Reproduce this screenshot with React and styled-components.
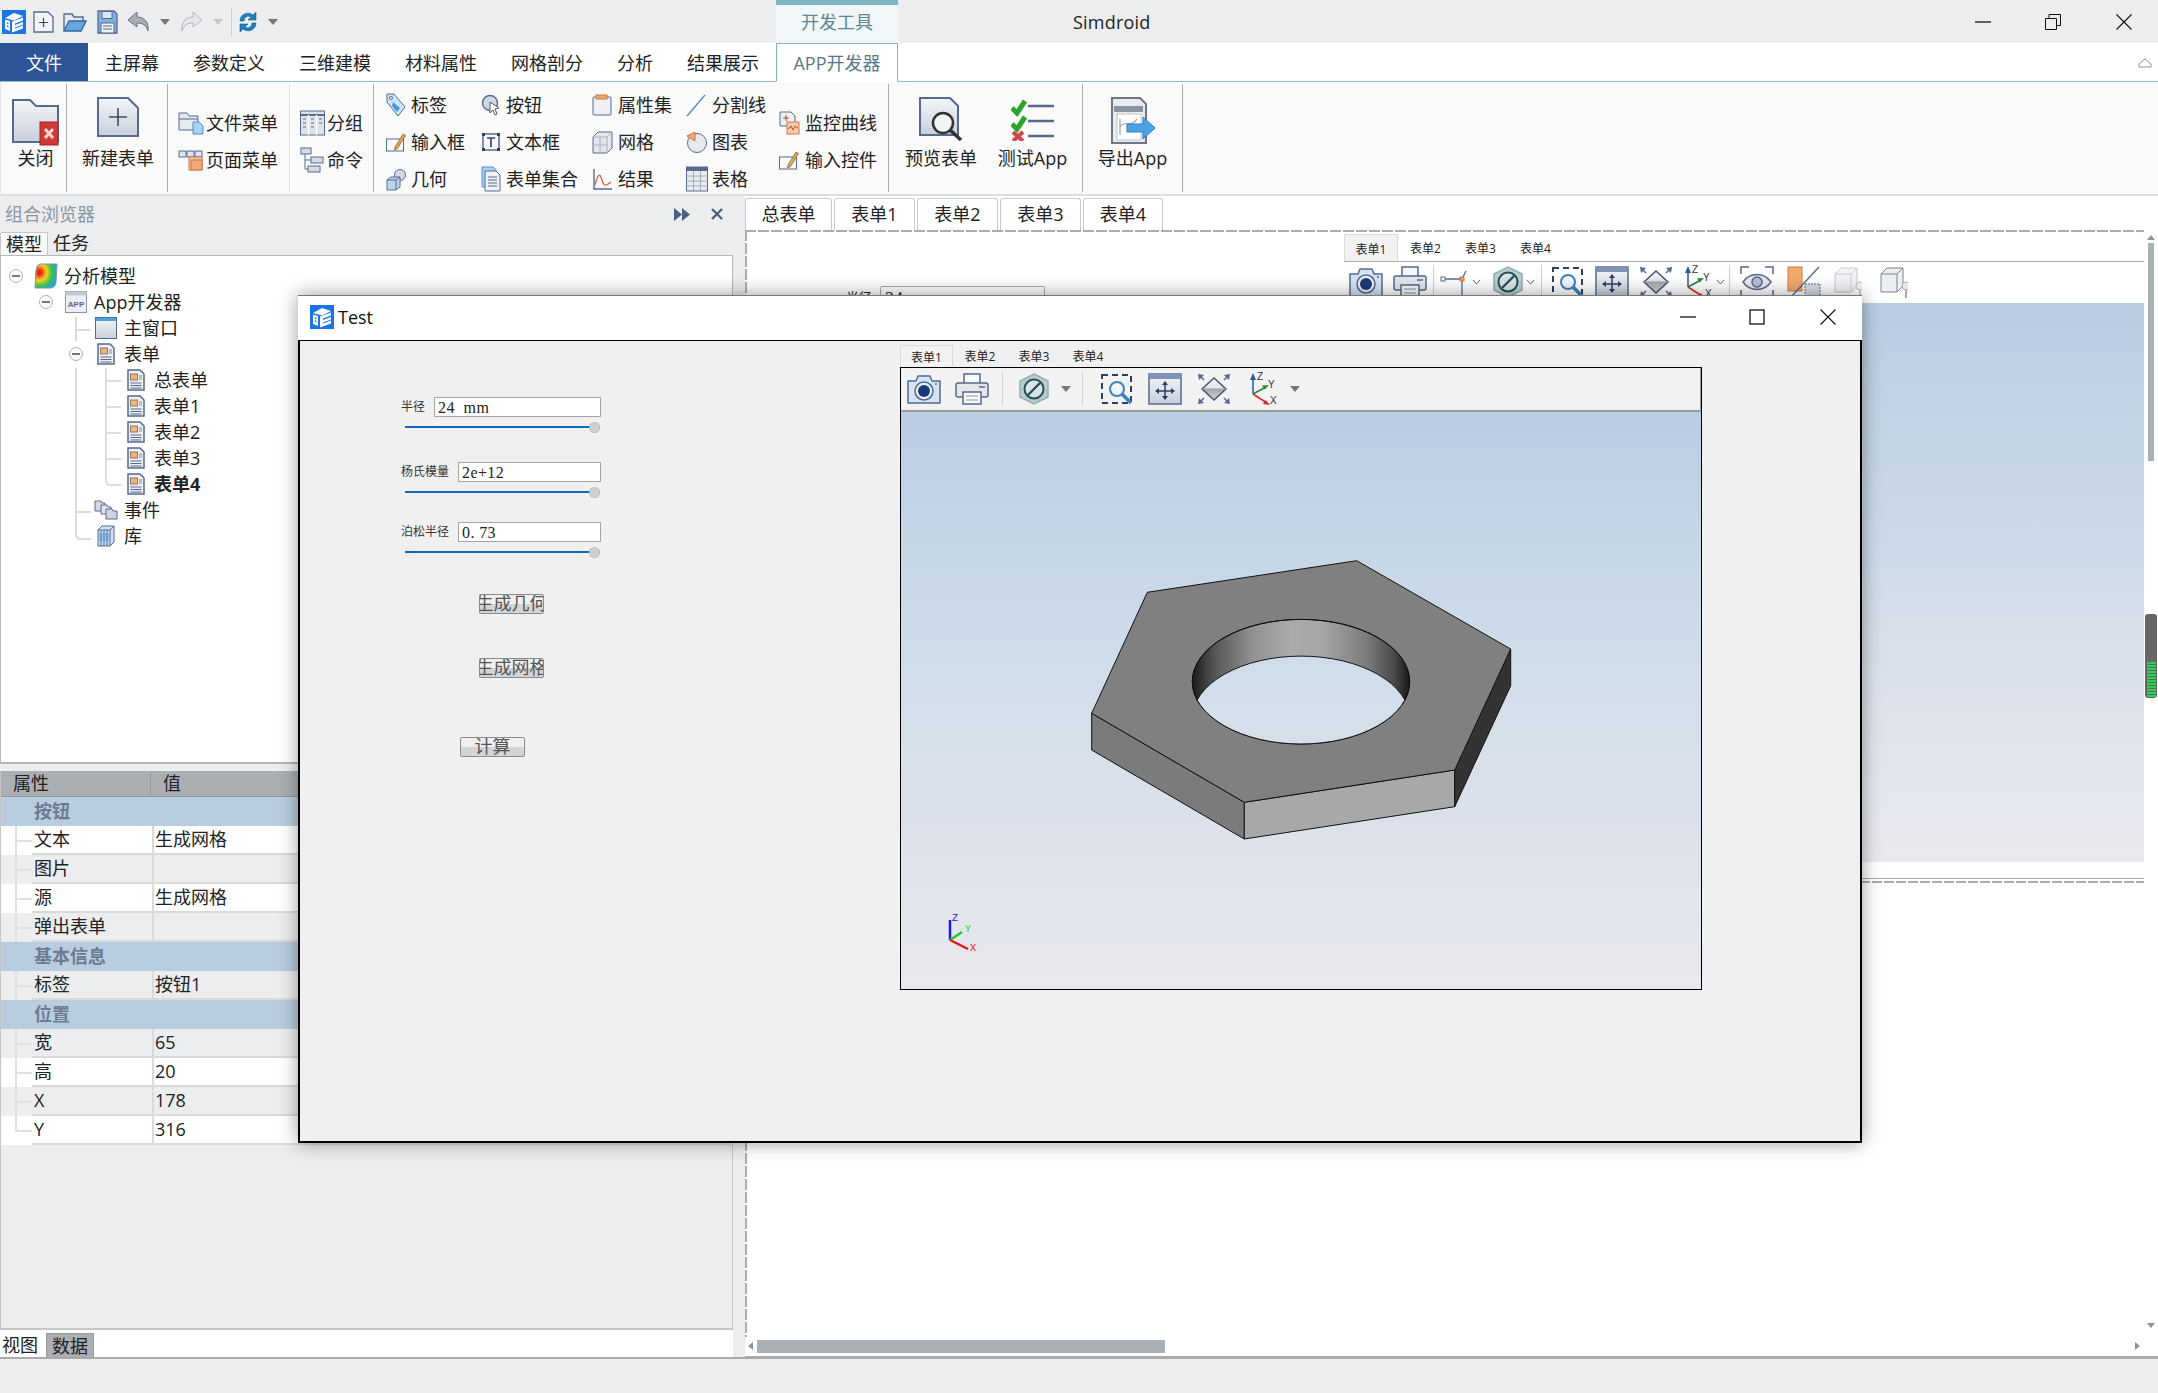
import React from "react";
import styled, { createGlobalStyle } from "styled-components";

const N = "#566a8f";
const UI_FONT = `"Open Sans", "Noto Sans CJK SC", sans-serif`;
const FORM_FONT = `"Liberation Serif", "Noto Sans CJK SC", serif`;

const GlobalStyle = createGlobalStyle`
  html, body { margin: 0; padding: 0; overflow: hidden; background: #ecedef; }
  body { font-family: ${UI_FONT}; color: #222; }
`;

const formGlyph = (
  <>
    <path d="M1 1h12l4 4v16H1z" fill="#eef0f4" stroke={N} strokeWidth="1.5" />
    <rect x="3.5" y="5" width="7" height="6" fill="#f2b27a" stroke="#8a7a6a" />
    <rect x="12" y="6" width="3" height="5" fill="#b8bfca" />
    <path d="M3.5 14h11M3.5 16.5h11M3.5 19h11" stroke={N} />
  </>
);

// every drawn icon: [width, height, shapes]
const ICONS = {
  logo: [24, 24, (
    <>
      <rect width="24" height="24" fill="#1b74e6" />
      <path d="M3 8l9-5 9 3-9 4.500z" fill="#fff" />
      <path d="M3 9.500l5 1.500v10l-5-2zM10 11.500l11-4v3l-8 3v1.500l8-3v2.500l-8 3v1l8-3v3l-11 4z" fill="#fff" />
      <path d="M5 13l1.500.5M5 16l1.500.5" stroke="#1b74e6" strokeWidth="1.500" />
    </>
  )],
  qnew: [21, 22, (
    <>
      <path d="M1 1h14l5 5v15H1z" fill="#f3f4f7" stroke={N} strokeWidth="1.300" />
      <path d="M10.500 7v9M6 11.500h9" stroke="#445" strokeWidth="1.200" />
    </>
  )],
  qopen: [24, 20, (
    <>
      <path d="M1 19V2h8l2 3h9v4" fill="#e4e8ee" stroke={N} strokeWidth="1.400" />
      <path d="M1 19l5-10h17l-5 10z" fill="#6aa6dc" stroke="#2d6aa0" strokeWidth="1.400" />
    </>
  )],
  qsave: [21, 24, (
    <>
      <path d="M1 1h16l3 3v19H1z" fill="#7fb0e0" stroke={N} strokeWidth="1.300" />
      <rect x="5" y="1.500" width="10" height="7" fill="#dfe8f2" stroke={N} />
      <rect x="4" y="13" width="13" height="10" fill="#eef0f3" stroke={N} />
      <path d="M6 16h9M6 19h9" stroke={N} />
    </>
  )],
  undo: [24, 24, (
    <path d="M10 2L1 10l9 7v-4c6 0 9 2 11 8 1-8-3-14-11-14z" fill="#a9adb5" stroke="#6c7280" />
  )],
  redo: [24, 24, (
    <path d="M14 2l9 8-9 7v-4c-6 0-9 2-11 8-1-8 3-14 11-14z" fill="#e5e6e9" stroke="#b2b5bb" />
  )],
  refresh: [20, 24, (
    <>
      <path d="M2 11C2 4 10 1 15 5l3-3v8h-8l3-3C10 5 6 7 6 11z" fill="#1f82bf" stroke="#155a86" strokeWidth=".6" />
      <path d="M18 13c0 7-8 10-13 6l-3 3v-8h8l-3 3c3 2 7 0 7-4z" fill="#1f82bf" stroke="#155a86" strokeWidth=".6" />
    </>
  )],
  folderClose: [47, 49, (
    <>
      <path d="M1 3h17l6 6h22v36H1z" fill="url(#pg)" stroke={N} strokeWidth="2" />
      <rect x="28" y="25" width="18" height="23" fill="#cf3a34" stroke="#a32620" />
      <path d="M33 32l8 9M41 32l-8 9" stroke="#f6d5d2" strokeWidth="3" />
    </>
  )],
  newDoc: [42, 40, (
    <>
      <path d="M1 1h30l10 10v28H1z" fill="url(#pg)" stroke={N} strokeWidth="2" />
      <path d="M21 11v18M12 20h18" stroke="#444d5e" strokeWidth="1.600" />
    </>
  )],
  fileMenu: [26, 24, (
    <>
      <path d="M1 19V2h8l2 3h9v14z" fill="#e6e9ef" stroke={N} />
      <path d="M1 8h19" stroke={N} />
      <path d="M15 11h6l4 4v8H15z" fill="#a9d2f2" stroke="#4f8fc4" />
    </>
  )],
  pageMenu: [26, 22, (
    <>
      <path d="M1 2h7v6H1zM9 2h7v6H9zM17 2h7v6h-7z" fill="#dfe3ea" stroke={N} />
      <rect x="11" y="8" width="13" height="13" fill="#f5c7a0" stroke="#d0774a" />
      <rect x="13" y="11" width="11" height="10" fill="#f0a878" stroke="#d0774a" />
    </>
  )],
  group: [25, 26, (
    <>
      <rect x=".5" y="1" width="24" height="24" fill="#dde1e8" stroke={N} />
      <path d="M.5 5h24" stroke={N} strokeWidth="2" />
      <path d="M8.500 5v20M16.500 5v20" stroke="#fff" strokeWidth="1.500" />
      <path d="M3 9h3M3 13h3M3 17h3M11 9h3M11 13h3M11 17h3M19 9h3M19 13h3" stroke="#8d94a3" strokeWidth="1.500" />
    </>
  )],
  command: [24, 26, (
    <>
      <rect x="1" y="1" width="10" height="6" fill="#d6dae2" stroke={N} />
      <rect x="11" y="10" width="12" height="6" fill="#d6dae2" stroke={N} />
      <rect x="8" y="19" width="12" height="6" fill="#d6dae2" stroke={N} />
      <path d="M5 7v15h3M5 13h6" fill="none" stroke={N} />
    </>
  )],
  tag: [20, 24, (
    <>
      <path d="M1 1h7l11 13-7 9L1 9z" fill="#cfe3f6" stroke={N} />
      <path d="M7 9l7 6-3 4-5-6z" fill="#4b97d8" />
      <circle cx="5" cy="5" r="1.500" fill="#fff" stroke={N} />
    </>
  )],
  inputBox: [20, 20, (
    <>
      <rect x=".5" y="7" width="17" height="12" fill="#fafafa" stroke={N} />
      <path d="M9 15l8-13 2.500 1.500-8 13-3 1.500z" fill="#e8a64c" stroke="#7a6a4a" strokeWidth=".8" />
    </>
  )],
  geom: [20, 24, (
    <>
      <circle cx="14" cy="8" r="5.500" fill="#d4d9e2" stroke={N} />
      <path d="M1 13l4-3h9v10l-4 3H1zM1 13h9v10M10 13l4-3" fill="#bcd5ec" stroke={N} />
    </>
  )],
  cursorBtn: [20, 22, (
    <>
      <circle cx="9" cy="9" r="7.500" fill="#cfd8e6" stroke={N} strokeWidth="1.400" />
      <path d="M9 8l9 6-4 1 2 5-2 1-2-5-3 3z" fill="#fff" stroke="#555" />
    </>
  )],
  textBox: [20, 22, (
    <>
      <rect x="2" y="3" width="16" height="16" fill="none" stroke={N} strokeWidth="1.500" />
      <path d="M1 2h3v3H1zM16 2h3v3h-3zM1 17h3v3H1zM16 17h3v3h-3z" fill="#2d3f66" />
      <path d="M6 7h8M10 7v9" stroke="#2d3f66" strokeWidth="1.600" />
    </>
  )],
  formSet: [20, 26, (
    <>
      <path d="M1 1h11l3 3v17H1z" fill="#a9d2f2" stroke="#4f8fc4" />
      <path d="M4 5h11l4 4v16H4z" fill="#eef0f4" stroke={N} />
      <path d="M7 11h9M7 14h9M7 17h9M7 20h9" stroke={N} />
    </>
  )],
  propSet: [20, 22, (
    <>
      <rect x="1" y="3" width="18" height="18" rx="1" fill="#eef0f4" stroke={N} />
      <rect x="4" y="1" width="11" height="4" fill="#f2a96d" stroke="#c67a42" />
    </>
  )],
  mesh: [21, 24, (
    <>
      <path d="M1 7l5-5h14v16l-5 5H1z" fill="#e3e6ec" stroke={N} />
      <path d="M1 7h14v16M15 7l5-5M8 7v16M1 15h14" fill="none" stroke="#aab2c0" />
    </>
  )],
  result: [20, 24, (
    <>
      <path d="M2 2v20h18" fill="none" stroke={N} strokeWidth="1.400" />
      <path d="M3 18C6 6 8 6 10 13s4 6 9 2" fill="none" stroke="#c8694f" strokeWidth="1.300" />
    </>
  )],
  divider: [20, 24, <path d="M1 23L19 2" stroke="#4f8fc4" strokeWidth="1.400" />],
  chart: [21, 24, (
    <>
      <circle cx="11" cy="13" r="9.500" fill="#e8eaf0" stroke={N} />
      <path d="M9 11V2L1 6z" fill="#f0a878" stroke="#c67a42" />
    </>
  )],
  table: [22, 26, (
    <>
      <rect x=".5" y="1" width="21" height="24" fill="#e9ebf0" stroke={N} />
      <rect x=".5" y="1" width="21" height="4" fill={N} />
      <path d="M7.500 5v20M14.500 5v20M.5 10h21M.5 15h21M.5 20h21" stroke="#a4acba" />
    </>
  )],
  monitor: [21, 24, (
    <>
      <path d="M1 1h11l4 4v10H1z" fill="#eef0f4" stroke={N} />
      <path d="M7 4v6M4 7h6" stroke="#b04a3a" />
      <rect x="8" y="11" width="12" height="12" fill="#f6cba7" stroke="#d0774a" />
      <path d="M9 18l3-3 2 4 2-4 3 2" fill="none" stroke="#b04a3a" />
    </>
  )],
  preview: [44, 44, (
    <>
      <path d="M1 1h30l8 8v29H1z" fill="url(#pg)" stroke={N} strokeWidth="2" />
      <circle cx="24" cy="26" r="10" fill="#f3f4f6" stroke="#333" strokeWidth="2.500" />
      <path d="M31 33l11 10" stroke="#333" strokeWidth="3.500" />
    </>
  )],
  testApp: [44, 44, (
    <>
      <path d="M1 11l5 5L14 4" fill="none" stroke="#2aa52a" strokeWidth="5" />
      <path d="M1 27l5 5 8-12" fill="none" stroke="#2aa52a" strokeWidth="5" />
      <path d="M2 35l10 9M12 35L2 44" stroke="#c94a4a" strokeWidth="4" />
      <path d="M17 9h26M17 24h26M17 39h26" stroke={N} strokeWidth="2.500" />
    </>
  )],
  exportApp: [44, 48, (
    <>
      <path d="M1 1h28l6 6v39H1z" fill="#e9ebef" stroke="#6f7684" strokeWidth="2" />
      <rect x="3" y="9" width="29" height="6" fill="#8b94a3" />
      <rect x="6" y="17" width="24" height="26" fill="#fff" stroke="#c0c5ce" />
      <path d="M9 38V22M9 30c5-8 10 2 17-8" fill="none" stroke="#aab2bd" strokeWidth="1.500" />
      <path d="M16 27h16v-7l12 11-12 11v-7H16z" fill="#4ba3e3" stroke="#2e82be" />
    </>
  )],
  heat: [24, 26, (
    <>
      <path d="M6 1h17l-1 18q-1 6-6 6H1l1-18q1-6 4-6z" fill="url(#hg)" stroke="#7e93ad" />
    </>
  )],
  appWin: [22, 22, (
    <>
      <rect x=".5" y=".5" width="21" height="21" fill="#eceef2" stroke="#8b96a8" />
      <rect x=".5" y=".5" width="21" height="4" fill="#c5cad3" />
      <text x="11" y="16" textAnchor="middle" fontFamily="Liberation Sans" fontWeight="700" fontSize="8" fill={N}>APP</text>
    </>
  )],
  mainWin: [22, 22, (
    <>
      <rect x=".5" y=".5" width="21" height="21" fill="url(#pg)" stroke={N} />
      <rect x="1" y="1" width="20" height="3" fill="#4ba3e3" />
    </>
  )],
  form: [18, 22, formGlyph],
  events: [24, 20, (
    <>
      <path d="M1 1h6l1 2h3v8H1z" fill="#d6dae2" stroke={N} />
      <path d="M7 5h6l1 2h3v7H7z" fill="#e0e3ea" stroke={N} />
      <path d="M12 9h6l1 2h4v8H12z" fill="#cfd4de" stroke={N} />
    </>
  )],
  lib: [18, 22, (
    <>
      <path d="M1 5l4-4h12v16l-4 4H1z" fill="#cfe1f3" stroke={N} />
      <path d="M1 5h12v16M13 5l4-4M4 5v16M7 5v16M10 5v16" fill="none" stroke={N} />
      <path d="M2 8h10v8H2z" fill="#5aa0dc" opacity=".55" />
    </>
  )],
  camera: [34, 30, (
    <>
      <path d="M1 7h8l2-5h12l2 5h8v22H1z" fill="#d4e4f5" stroke={N} strokeWidth="1.500" strokeLinejoin="round" />
      <circle cx="17" cy="17" r="9" fill="#eaf1f9" stroke={N} strokeWidth="1.500" />
      <circle cx="17" cy="17" r="6" fill="#1d3a78" />
      <circle cx="29" cy="10" r="1" fill={N} />
    </>
  )],
  printer: [34, 32, (
    <>
      <path d="M9 10V1h16v9" fill="#f7f8fa" stroke={N} strokeWidth="1.500" />
      <rect x="1" y="10" width="32" height="14" rx="2" fill="#e3e6ec" stroke={N} strokeWidth="1.500" />
      <path d="M24 14h6" stroke={N} strokeWidth="1.500" />
      <rect x="8" y="19" width="18" height="12" fill="#f7f8fa" stroke={N} strokeWidth="1.500" />
      <path d="M11 23h12M11 27h12" stroke="#8d97a8" />
    </>
  )],
  measure: [30, 30, (
    <>
      <path d="M4 12h18M22 12v18M22 12l4-8" fill="none" stroke={N} strokeWidth="1.300" />
      <rect x="1" y="10" width="4" height="4" fill="#fff" stroke={N} />
      <rect x="20" y="10" width="4" height="4" fill="#f0a060" stroke="#c67a42" />
    </>
  )],
  ban: [30, 32, (
    <>
      <path d="M15 1l14 7v16l-14 7-14-7V8z" fill="#b9cdd0" stroke="#93afb3" strokeWidth="1.500" />
      <circle cx="15" cy="16" r="9.500" fill="#dbe3e6" stroke="#274f57" strokeWidth="2" />
      <path d="M9 22L21 10" stroke="#274f57" strokeWidth="2.400" />
    </>
  )],
  zoomBox: [32, 32, (
    <>
      <rect x="1" y="2" width="29" height="28" fill="none" stroke="#2d3f66" strokeWidth="2" strokeDasharray="6 4" />
      <circle cx="16" cy="16" r="7" fill="#f2f5f9" stroke="#3b83bd" strokeWidth="2" />
      <path d="M21 21l9 9" stroke="#3b83bd" strokeWidth="3.500" />
    </>
  )],
  fit: [34, 32, (
    <>
      <rect x="1" y="1" width="32" height="30" fill="url(#pg)" stroke={N} strokeWidth="1.500" />
      <rect x="1" y="1" width="32" height="5" fill="#7f93b6" />
      <path d="M17 9v17M8 18h18" stroke="#2d3f66" strokeWidth="1.500" />
      <path d="M17 8l-3 4h6zM17 27l-3-4h6zM7 18l4-3v6zM27 18l-4-3v6z" fill="#2d3f66" />
    </>
  )],
  diamond: [34, 32, (
    <>
      <path d="M17 5l12 11-12 11L5 16z" fill="url(#dg)" stroke="#445572" strokeWidth="1.500" />
      <path d="M5 16h24" stroke="#9a9ea6" />
      <path d="M1 1l6 1-5 5zM33 1l-6 1 5 5zM1 31l6-1-5-5zM33 31l-6-1 5-5z" fill={N} />
      <path d="M3 3l4 4M31 3l-4 4M3 29l4-4M31 29l-4-4" stroke={N} strokeWidth="1.500" />
    </>
  )],
  axes: [32, 34, (
    <>
      <path d="M6 22V6" stroke="#2a56a8" strokeWidth="1.500" />
      <path d="M6 1L3 8h6z" fill="#2a56a8" />
      <path d="M6 22l13-7" stroke="#1e8a3d" strokeWidth="1.500" />
      <path d="M22 13l-7 .5 2.500 4z" fill="#1e8a3d" />
      <path d="M6 22l14 9" stroke="#d62a2a" strokeWidth="1.500" />
      <path d="M23 33l-7-1 2.500-4z" fill="#d62a2a" />
      <text x="10" y="8" fontFamily="Liberation Sans" fontSize="10" fill="#333">Z</text>
      <text x="21" y="16" fontFamily="Liberation Sans" fontSize="10" fill="#333">Y</text>
      <text x="23" y="32" fontFamily="Liberation Sans" fontSize="10" fill="#333">X</text>
    </>
  )],
  eye: [34, 32, (
    <>
      <path d="M1 8V1h8M25 1h8v7M1 24v7h8M25 31h8v-7" fill="none" stroke={N} strokeWidth="1.500" />
      <path d="M3 16C10 6 24 6 31 16 24 26 10 26 3 16z" fill="#e5e8ee" stroke={N} strokeWidth="1.500" />
      <circle cx="17" cy="16" r="5" fill="#b5c0d2" stroke={N} strokeWidth="1.500" />
    </>
  )],
  split: [36, 32, (
    <>
      <rect x="1" y="1" width="14" height="24" fill="#f2a96d" stroke="#d07a3f" />
      <path d="M32 1L3 32" stroke={N} strokeWidth="1.400" />
      <rect x="18" y="18" width="15" height="14" fill="#d8dce4" stroke={N} strokeDasharray="2 1" />
    </>
  )],
  box1: [28, 32, (
    <>
      <path d="M1 8l6-6h16v18l-6 6H1z" fill="#f2f3f5" stroke="#c9ccd2" />
      <path d="M1 8h16v18M17 8l6-6" fill="none" stroke="#c9ccd2" />
      <circle cx="26" cy="20" r="4" fill="#f2f3f5" stroke="#c0c3c9" />
      <path d="M26 24v8" stroke="#c0c3c9" strokeWidth="2" />
    </>
  )],
  box2: [28, 32, (
    <>
      <path d="M1 8l6-6h16v18l-6 6H1z" fill="#eceef1" stroke="#7d838d" />
      <path d="M1 8h16v18M17 8l6-6" fill="none" stroke="#7d838d" />
      <circle cx="26" cy="20" r="4" fill="#e8e9ec" stroke="#a5a9b0" />
      <path d="M26 24v8" stroke="#a5a9b0" strokeWidth="2" />
    </>
  )],
};

const Svg = styled.svg`
  display: block;
  flex: none;
  margin-left: ${(p) => p.$ml || 0}px;
`;

const Icon = ({ name, ml }) => {
  const [w, h, body] = ICONS[name];
  return (
    <Svg $ml={ml} width={w} height={h} viewBox={`0 0 ${w} ${h}`}>
      {body}
    </Svg>
  );
};

const Defs = styled.svg`
  position: absolute;
  width: 0;
  height: 0;
`;

const Page = styled.div`
  position: relative;
  width: 2158px;
  height: 1393px;
  display: flex;
  flex-direction: column;
  overflow: hidden;
  background: #ecedef;
  font-size: 18px;
  line-height: 24px;
`;

/* title bar */
const TitleBar = styled.div`
  height: 43px;
  display: flex;
  flex: none;
`;
const QuickBar = styled.div`
  width: 776px;
  flex: none;
  display: flex;
  align-items: center;
  padding-left: 2px;
  box-sizing: border-box;
`;
const Caret = styled.span`
  flex: none;
  margin-left: ${(p) => p.$ml || 0}px;
  border-left: 5px solid transparent;
  border-right: 5px solid transparent;
  border-top: 6px solid ${(p) => p.$color || "#777"};
`;
const QuickSep = styled.span`
  width: 1px;
  height: 28px;
  margin-left: 8px;
  background: #c8cacd;
`;
const ContextTab = styled.div`
  width: 122px;
  flex: none;
  box-sizing: border-box;
  border-top: 5px solid #7fb5c2;
  background: #f1f6f9;
  color: #5c8796;
  text-align: center;
  line-height: 35px;
`;
const AppTitle = styled.div`
  padding-left: 175px;
  line-height: 44px;
  color: #222;
  letter-spacing: 0.2px;
`;
const WindowButtons = styled.div`
  margin-left: auto;
  padding-right: 26px;
  display: flex;
  align-items: center;
`;
const WinGlyph = styled.svg`
  display: block;
  margin-left: ${(p) => p.$ml || 0}px;
`;

/* ribbon tabs */
const TabBar = styled.div`
  height: 39px;
  flex: none;
  box-sizing: border-box;
  background: #fff;
  border-bottom: 1px solid #8fbac6;
  display: flex;
  position: relative;
`;
const MenuTab = styled.div`
  padding: 0 17px;
  line-height: 40px;
  ${(p) => p.$file && "width: 88px; box-sizing: border-box; text-align: center; background: #2b5597; color: #fff;"}
  ${(p) =>
    p.$active &&
    `width: 122px; height: 39px; box-sizing: border-box; border: 1px solid #7fb5c2; border-bottom: 1px solid #fff;
     color: #56798a; background: #fff; padding: 0; text-align: center; line-height: 38px; white-space: nowrap;`}
`;
const Collapse = styled.svg`
  margin: 15px 6px 0 auto;
`;

/* ribbon */
const Ribbon = styled.div`
  height: 114px;
  flex: none;
  box-sizing: border-box;
  background: #fafafa;
  border-bottom: 2px solid #dcdde0;
  border-left: 1px solid #e4e5e8;
  padding-top: 2px;
  display: flex;
`;
const RibbonGroup = styled.div`
  width: ${(p) => p.$w}px;
  height: 108px;
  box-sizing: border-box;
  border-right: 1px solid ${(p) => (p.$soft ? "#dfe0e3" : "#a9abaf")};
  display: flex;
  flex: none;
  padding-left: ${(p) => p.$pad || 0}px;
`;
const LargeButton = styled.div`
  width: ${(p) => p.$w || "100%"};
  flex: none;
  display: flex;
  flex-direction: column;
  align-items: center;
  padding-top: 13px;
  box-sizing: border-box;
`;
const LargeIcon = styled.div`
  height: 49px;
`;
const LargeLabel = styled.div`
  white-space: nowrap;
  line-height: 24px;
`;
const SmallColumn = styled.div`
  width: ${(p) => (p.$w ? `${p.$w}px` : "auto")};
  flex: none;
  display: flex;
  flex-direction: column;
  padding-top: ${(p) => p.$top}px;
`;
const SmallButton = styled.div`
  height: 37px;
  flex: none;
  display: flex;
  align-items: center;
  white-space: nowrap;
`;
const SmallIcon = styled.div`
  width: ${(p) => p.$w || 20}px;
  flex: none;
  margin-right: ${(p) => p.$gap || 5}px;
`;

/* main area */
const Main = styled.div`
  flex: 1;
  display: flex;
  min-height: 0;
`;
const LeftPanel = styled.div`
  width: 733px;
  flex: none;
  display: flex;
  flex-direction: column;
  margin-right: 12px;
`;
const BrowserHead = styled.div`
  height: 36px;
  flex: none;
  display: flex;
  align-items: center;
  padding: 0 10px 0 5px;
  color: #8c96a3;
`;
const HeadButtons = styled.div`
  margin-left: auto;
  display: flex;
  align-items: center;
  gap: 21px;
`;
const ModelTabs = styled.div`
  height: 23px;
  flex: none;
  display: flex;
  align-items: flex-end;
`;
const ModelTab = styled.div`
  height: 23px;
  box-sizing: border-box;
  padding: 0 5px;
  line-height: 23px;
  ${(p) => p.$on && "background:#fafafa; border:1px solid #c4c6ca; border-bottom:none; border-radius:2px 2px 0 0;"}
`;
const Tree = styled.div`
  position: relative;
  height: 509px;
  flex: none;
  box-sizing: border-box;
  background: #fff;
  border: 1px solid #b4b6ba;
  border-width: 1px 1px 2px 1px;
  padding-top: 7px;
  margin-bottom: 7px;
`;
const TreeLines = styled.svg`
  position: absolute;
  left: 0;
  top: 0;
`;
const TreeRow = styled.div`
  height: 26px;
  display: flex;
  align-items: center;
  padding-left: ${(p) => 8 + p.$depth * 30}px;
`;
const ToggleSlot = styled.div`
  width: 14px;
  height: 14px;
  flex: none;
  box-sizing: border-box;
  display: flex;
  align-items: center;
  justify-content: center;
  ${(p) => p.$shown && "border: 1px solid #b0b3b8; border-radius: 50%; background: #fafafa;"}
  &::before {
    content: "";
    width: 8px;
    height: 2px;
    background: ${(p) => (p.$shown ? "#777" : "transparent")};
  }
`;
const TreeIcon = styled.div`
  width: 24px;
  flex: none;
  margin-left: 11px;
  display: flex;
  justify-content: center;
  position: relative;
`;
const TreeLabel = styled.div`
  margin-left: 6px;
  font-weight: ${(p) => (p.$bold ? 700 : 400)};
`;

const Properties = styled.div`
  flex: 1;
  min-height: 0;
  background: #ecedef;
  border: 1px solid #c4c6ca;
  border-width: 0 1px 2px 1px;
`;
const PropHead = styled.div`
  height: 25px;
  display: flex;
  background: #abafb3;
  border-bottom: 1px solid #8f9397;
  line-height: 25px;
`;
const PropHeadCell = styled.div`
  width: ${(p) => (p.$w ? `${p.$w}px` : "auto")};
  box-sizing: border-box;
  padding-left: 12px;
  ${(p) => p.$w && "border-right: 1px solid #979b9f;"}
`;
const PropGroup = styled.div`
  height: 29px;
  background: #b9cde0;
  color: #6c7c90;
  font-weight: 700;
  padding-left: 33px;
  line-height: 28px;
`;
const PropRow = styled.div`
  position: relative;
  height: 29px;
  display: flex;
  background: ${(p) => (p.$alt ? "#ecedef" : "#fff")};
  &::before {
    content: "";
    position: absolute;
    left: 14px;
    top: 0;
    width: 2px;
    height: ${(p) => (p.$last ? "15px" : "29px")};
    background: #dfe0e2;
  }
  &::after {
    content: "";
    position: absolute;
    left: 14px;
    top: 14px;
    width: 17px;
    height: 2px;
    background: #dfe0e2;
  }
`;
const PropName = styled.div`
  width: 118px;
  margin-left: 31px;
  padding-left: 2px;
  box-sizing: content-box;
  border-bottom: 2px solid #d9dadc;
  line-height: 27px;
  flex: none;
`;
const PropValue = styled.div`
  flex: 1;
  box-sizing: border-box;
  border-left: 2px solid #d9dadc;
  border-bottom: 2px solid #d9dadc;
  padding-left: 1px;
  line-height: 27px;
`;
const BottomTabs = styled.div`
  height: 27px;
  flex: none;
  background: #fff;
  display: flex;
  align-items: flex-end;
  padding: 0 0 0 2px;
`;
const BottomTab = styled.div`
  height: 24px;
  line-height: 25px;
  padding: 0 5px 0 ${(p) => (p.$on ? 5 : 0)}px;
  margin-right: ${(p) => (p.$on ? 0 : 3)}px;
  ${(p) => p.$on && "background: #abafb3; border: 1px solid #999; border-bottom: none; box-sizing: border-box;"}
`;

/* right side: form designer behind the dialog */
const RightPanel = styled.div`
  flex: 1;
  min-width: 0;
  display: flex;
  flex-direction: column;
  background: #fff;
`;
const FormTabs = styled.div`
  height: 34px;
  flex: none;
  box-sizing: border-box;
  padding-top: 2px;
  display: flex;
  gap: 2px;
  background: #fff;
`;
const FormTab = styled.div`
  width: ${(p) => p.$w || 79}px;
  height: 32px;
  box-sizing: border-box;
  border: 1px solid #c8c9cc;
  border-bottom: none;
  border-radius: 3px 3px 0 0;
  text-align: center;
  line-height: 30px;
`;
const DesignArea = styled.div`
  flex: 1;
  min-height: 0;
  display: flex;
`;
const Surface = styled.div`
  flex: 1;
  min-width: 0;
  box-sizing: border-box;
  padding: 4px 0 0 2px;
  background:
    repeating-linear-gradient(90deg, #a9abaf 0 11px, #fff 11px 13px) top left / 100% 2px no-repeat,
    repeating-linear-gradient(180deg, #a9abaf 0 11px, #fff 11px 13px) top left / 2px 100% no-repeat;
  display: flex;
`;
const MiniForm = styled.div`
  width: 597px;
  flex: none;
  padding: 52px 0 0 99px;
  box-sizing: border-box;
  display: flex;
  gap: 8px;
  font-family: ${FORM_FONT};
  font-size: 13px;
`;
const MiniInput = styled.div`
  width: 165px;
  height: 24px;
  box-sizing: border-box;
  border: 1px solid #aaa;
  border-radius: 2px;
  padding-left: 4px;
  font-size: 18px;
`;
const MiniViewer = styled.div`
  flex: 1;
  display: flex;
  flex-direction: column;
`;
const MiniTabs = styled.div`
  height: 27px;
  flex: none;
  display: flex;
  border-bottom: 1px solid #aaa;
`;
const ViewTab = styled.div`
  width: ${(p) => p.$w}px;
  height: ${(p) => p.$h}px;
  box-sizing: border-box;
  font-size: 12px;
  line-height: ${(p) => p.$h + 2}px;
  text-align: center;
  white-space: nowrap;
  ${(p) => p.$on && "background: #f2f2f2; border: 1px solid #d9d9d9; border-bottom: none;"}
`;
const MiniToolbar = styled.div`
  height: 41px;
  flex: none;
  box-sizing: border-box;
  display: flex;
  align-items: center;
  padding: 0 0 2px 5px;
`;
const ToolSep = styled.span`
  flex: none;
  width: 1px;
  height: ${(p) => p.$h || 34}px;
  margin-left: ${(p) => p.$ml}px;
  background: #d0d1d4;
`;
const TinyChevron = styled.svg`
  flex: none;
  margin-left: ${(p) => p.$ml}px;
`;
const MiniCanvas = styled.div`
  height: 559px;
  flex: none;
  background: linear-gradient(#b9cde3, #cddbe9 46%, #d8dfea 60%, #e4e7ee 88%, #e8e9ed);
`;
const DashLines = styled.div`
  margin-top: 16px;
  height: 5px;
  box-sizing: border-box;
  border-top: 1px solid #a9abaf;
  background: repeating-linear-gradient(90deg, #a9abaf 0 10px, #fff 10px 12px) left bottom / 100% 2px no-repeat;
`;
const VScroll = styled.div`
  width: 14px;
  flex: none;
  display: flex;
  flex-direction: column;
  align-items: center;
  padding-top: 5px;
`;
const ArrowUp = styled.span`
  flex: none;
  border-left: 4px solid transparent;
  border-right: 4px solid transparent;
  border-bottom: 5px solid #8c9399;
`;
const ArrowDown = styled(ArrowUp)`
  margin-top: auto;
  margin-bottom: 9px;
  border-bottom: none;
  border-top: 5px solid #8c9399;
`;
const VThumb = styled.div`
  width: 6px;
  height: 218px;
  margin-top: 3px;
  background: #abb0b4;
`;
const GripThumb = styled.div`
  width: 12px;
  height: 84px;
  margin-top: 153px;
  box-sizing: border-box;
  border-radius: 3px;
  background: #676767;
  padding-top: 48px;
  display: flex;
  flex-direction: column;
  gap: 1px;
  align-items: center;
`;
const GripLine = styled.span`
  width: 9px;
  height: 2px;
  background: #25d24e;
`;
const HScroll = styled.div`
  height: 20px;
  flex: none;
  box-sizing: border-box;
  border-bottom: 1px solid #aaa;
  display: flex;
  align-items: center;
  padding: 0 18px 1px 3px;
  background: #fff;
`;
const ArrowLeft = styled.span`
  flex: none;
  border-top: 4px solid transparent;
  border-bottom: 4px solid transparent;
  border-right: 5px solid #8c9399;
`;
const ArrowRight = styled.span`
  flex: none;
  margin-left: auto;
  border-top: 4px solid transparent;
  border-bottom: 4px solid transparent;
  border-left: 5px solid #8c9399;
`;
const HThumb = styled.div`
  width: 408px;
  height: 13px;
  margin-left: 4px;
  background: #abb0b4;
`;
const StatusBar = styled.div`
  height: 36px;
  flex: none;
  box-sizing: border-box;
  border-top: 2px solid #aaa;
  background: #ecedef;
`;

/* the floating Test window */
const Dialog = styled.div`
  position: absolute;
  left: 298px;
  top: 295px;
  width: 1564px;
  height: 848px;
  display: flex;
  flex-direction: column;
  background: #fff;
  border-top: 1px solid #777;
  box-sizing: border-box;
  box-shadow: 0 0 18px rgba(0, 0, 0, 0.4);
`;
const DialogTitle = styled.div`
  height: 44px;
  flex: none;
  display: flex;
  align-items: center;
  padding: 0 0 2px 12px;
  box-sizing: border-box;
  gap: 4px;
  font-size: 18px;
  color: #111;
`;
const DialogBody = styled.div`
  flex: 1;
  min-height: 0;
  display: flex;
  box-sizing: border-box;
  border: 2px solid #000;
  border-top-width: 1px;
  background: #f0f0f0;
`;
const FormPane = styled.div`
  width: 600px;
  flex: none;
  padding-top: 56px;
  box-sizing: border-box;
`;
const Field = styled.div`
  width: 200px;
  margin: ${(p) => p.$mt || 0}px 0 0 101px;
`;
const FieldRow = styled.div`
  display: flex;
  align-items: center;
  height: 20px;
`;
const FieldLabel = styled.div`
  width: ${(p) => p.$w}px;
  flex: none;
  font-size: 12px;
  line-height: 22px;
  white-space: nowrap;
  color: #333;
`;
const FieldInput = styled.div`
  flex: 1;
  height: 20px;
  box-sizing: border-box;
  background: #fff;
  border: 1px solid #a5a5a5;
  padding-left: 3px;
  font-family: ${FORM_FONT};
  font-size: 16px;
  line-height: 20px;
  white-space: pre;
  letter-spacing: 0.4px;
`;
const SliderRow = styled.div`
  position: relative;
  width: 195px;
  height: 10px;
  margin: 5px 0 0 4px;
  display: flex;
  align-items: center;
`;
const SliderTrack = styled.div`
  flex: 1;
  height: 2.500px;
  background: #0f6cbd;
`;
const SliderThumb = styled.div`
  position: absolute;
  right: 0;
  top: 0;
  width: 11px;
  height: 11px;
  border-radius: 50%;
  background: #cfcfcf;
  border: 1px dotted #aaa;
  box-sizing: border-box;
`;
const FormButton = styled.div`
  width: 65px;
  height: 20px;
  margin: ${(p) => p.$mt}px 0 0 ${(p) => p.$ml}px;
  box-sizing: border-box;
  border: 1px solid #8a8a8a;
  border-radius: 2px;
  background: linear-gradient(#efefef 50%, #d4d4d4 50%);
  display: flex;
  justify-content: center;
  overflow: hidden;
  font-family: ${FORM_FONT};
  font-size: 18px;
  line-height: 18px;
  color: #555;
  white-space: nowrap;
`;
const Viewer = styled.div`
  width: 802px;
  flex: none;
  padding-top: 4px;
`;
const ViewerTabs = styled.div`
  height: 22px;
  display: flex;
`;
const ViewerFrame = styled.div`
  height: 623px;
  box-sizing: border-box;
  border: 1px solid #000;
  display: flex;
  flex-direction: column;
`;
const ViewerToolbar = styled.div`
  height: 44px;
  flex: none;
  box-sizing: border-box;
  background: #f2f2f2;
  border-bottom: 2px solid #9a9a9a;
  border-right: 1px solid #9a9a9a;
  display: flex;
  align-items: center;
  padding-left: 6px;
`;
const ViewerCanvas = styled.svg`
  display: block;
  flex: 1;
  width: 100%;
  min-height: 0;
`;

const TABS = ["主屏幕", "参数定义", "三维建模", "材料属性", "网格剖分", "分析", "结果展示"];

const TREE = [
  { d: 0, t: true, i: "heat", s: "分析模型" },
  { d: 1, t: true, i: "appWin", s: "App开发器" },
  { d: 2, i: "mainWin", s: "主窗口" },
  { d: 2, t: true, i: "form", s: "表单" },
  { d: 3, i: "form", s: "总表单" },
  { d: 3, i: "form", s: "表单1" },
  { d: 3, i: "form", s: "表单2" },
  { d: 3, i: "form", s: "表单3" },
  { d: 3, i: "form", s: "表单4", b: true },
  { d: 2, i: "events", s: "事件" },
  { d: 2, i: "lib", s: "库" },
];

const PROPS = [
  { g: "按钮" },
  { k: "文本", v: "生成网格" },
  { k: "图片", v: "", alt: true },
  { k: "源", v: "生成网格" },
  { k: "弹出表单", v: "", alt: true },
  { g: "基本信息" },
  { k: "标签", v: "按钮1", alt: true },
  { g: "位置" },
  { k: "宽", v: "65", alt: true },
  { k: "高", v: "20" },
  { k: "X", v: "178", alt: true },
  { k: "Y", v: "316", last: true },
];

const Small = ({ icon, label, w, gap }) => (
  <SmallButton>
    <SmallIcon $w={w} $gap={gap}>
      <Icon name={icon} />
    </SmallIcon>
    {label}
  </SmallButton>
);

const Large = ({ icon, label, w }) => (
  <LargeButton $w={w}>
    <LargeIcon>
      <Icon name={icon} />
    </LargeIcon>
    <LargeLabel>{label}</LargeLabel>
  </LargeButton>
);

const Chevron = ({ ml }) => (
  <TinyChevron $ml={ml} width="9" height="6" viewBox="0 0 9 6">
    <path d="M1 1l3.500 4L8 1" fill="none" stroke="#667" />
  </TinyChevron>
);

const MinGlyph = ({ ml }) => (
  <WinGlyph $ml={ml} width="16" height="16" viewBox="0 0 16 16">
    <path d="M0 8h16" stroke="#111" strokeWidth="1.300" />
  </WinGlyph>
);
const CloseGlyph = ({ ml }) => (
  <WinGlyph $ml={ml} width="16" height="16" viewBox="0 0 16 16">
    <path d="M.5.5l15 15M15.500.5l-15 15" stroke="#111" strokeWidth="1.100" />
  </WinGlyph>
);

const NutView = () => {
  const h = 36.7;
  const top = "1147.3,592.3 1356.7,560.7 1510.7,649 1454.7,770 1244.3,802.3 1091.7,713.3";
  return (
    <ViewerCanvas viewBox="901 412 800 577" preserveAspectRatio="none">
      <defs>
        <linearGradient id="viewBg" gradientUnits="userSpaceOnUse" x1="0" y1="412" x2="0" y2="989">
          <stop offset="0" stopColor="#b9cde3" />
          <stop offset="0.45" stopColor="#d0deea" />
          <stop offset="0.7" stopColor="#dbe1eb" />
          <stop offset="1" stopColor="#e8e9ed" />
        </linearGradient>
        <linearGradient id="wall" x1="0" x2="1" y1="0" y2="0">
          <stop offset="0" stopColor="#1a1a1a" />
          <stop offset="0.1" stopColor="#555" />
          <stop offset="0.27" stopColor="#8f8f8f" />
          <stop offset="0.45" stopColor="#ababab" />
          <stop offset="0.6" stopColor="#a6a6a6" />
          <stop offset="0.8" stopColor="#7c7c7c" />
          <stop offset="0.93" stopColor="#484848" />
          <stop offset="1" stopColor="#181818" />
        </linearGradient>
        <clipPath id="holeClip">
          <ellipse cx="1301" cy="681.7" rx="108.7" ry="62.3" />
        </clipPath>
      </defs>
      <rect x="901" y="412" width="800" height="577" fill="url(#viewBg)" />
      <g stroke="#111" strokeWidth="1" strokeLinejoin="round">
        <polygon points={`1091.7,713.3 1244.3,802.3 1244.3,${802.3 + h} 1091.7,${713.3 + h}`} fill="#7b7b7b" />
        <polygon points={`1244.3,802.3 1454.7,770 1454.7,${770 + h} 1244.3,${802.3 + h}`} fill="#a8a8a8" />
        <polygon points={`1454.7,770 1510.7,649 1510.7,${649 + h} 1454.7,${770 + h}`} fill="#333" />
        <polygon points={top} fill="#808080" />
        <ellipse cx="1301" cy="681.7" rx="108.7" ry="62.3" fill="url(#wall)" />
        <g clipPath="url(#holeClip)">
          <ellipse cx="1301" cy={681.7 + h} rx="108.7" ry="62.3" fill="url(#viewBg)" />
        </g>
        <ellipse cx="1301" cy="681.7" rx="108.7" ry="62.3" fill="none" />
      </g>
      <path d="M950 940v-20" stroke="#1a1aee" strokeWidth="2.500" />
      <path d="M950 940l12-8" stroke="#22cc22" strokeWidth="2.500" />
      <path d="M950 940l18 9" stroke="#ee1111" strokeWidth="2.500" />
      <g fontFamily="Liberation Mono" fontSize="10">
        <text x="952" y="921" fill="#1a1aee">Z</text>
        <text x="965" y="932" fill="#22cc22">Y</text>
        <text x="970" y="951" fill="#ee1111">X</text>
      </g>
    </ViewerCanvas>
  );
};

const App = () => (
  <Page>
    <GlobalStyle />
    <Defs aria-hidden="true">
      <defs>
        <linearGradient id="pg" x1="0" y1="0" x2="0" y2="1">
          <stop offset="0" stopColor="#f4f5f8" />
          <stop offset="1" stopColor="#c8cfdb" />
        </linearGradient>
        <linearGradient id="dg" x1="0" y1="0" x2="0" y2="1">
          <stop offset="0" stopColor="#f4f4f5" />
          <stop offset="0.5" stopColor="#e3e3e5" />
          <stop offset="0.5" stopColor="#a5a7ab" />
          <stop offset="1" stopColor="#d5d6d9" />
        </linearGradient>
        <radialGradient id="hg" cx="0.2" cy="0.35" r="0.95">
          <stop offset="0.08" stopColor="#e8201c" />
          <stop offset="0.35" stopColor="#f7d21e" />
          <stop offset="0.6" stopColor="#37c24a" />
          <stop offset="0.85" stopColor="#22a7e0" />
          <stop offset="1" stopColor="#2a5fc0" />
        </radialGradient>
      </defs>
    </Defs>

    <TitleBar>
      <QuickBar>
        <Icon name="logo" />
        <Icon name="qnew" ml={7} />
        <Icon name="qopen" ml={9} />
        <Icon name="qsave" ml={10} />
        <Icon name="undo" ml={9} />
        <Caret $ml={9} />
        <Icon name="redo" ml={9} />
        <Caret $ml={10} $color="#c4c6ca" />
        <QuickSep />
        <Icon name="refresh" ml={6} />
        <Caret $ml={10} />
      </QuickBar>
      <ContextTab>开发工具</ContextTab>
      <AppTitle>Simdroid</AppTitle>
      <WindowButtons>
        <MinGlyph />
        <WinGlyph $ml={54} width="16" height="16" viewBox="0 0 16 16">
          <path d="M.5 4.500h11v11H.5zM4 4.500V.5h11.500v11h-4" fill="none" stroke="#111" />
        </WinGlyph>
        <CloseGlyph ml={55} />
      </WindowButtons>
    </TitleBar>

    <TabBar>
      <MenuTab $file>文件</MenuTab>
      {TABS.map((t) => (
        <MenuTab key={t}>{t}</MenuTab>
      ))}
      <MenuTab $active>APP开发器</MenuTab>
      <Collapse width="14" height="10" viewBox="0 0 14 10">
        <path d="M1 6l6-5 6 5v3H1z" fill="none" stroke="#8a9099" />
      </Collapse>
    </TabBar>

    <Ribbon>
      <RibbonGroup $w={66} $pad={4}>
        <Large icon="folderClose" label="关闭" />
      </RibbonGroup>
      <RibbonGroup $w={101} $pad={2}>
        <Large icon="newDoc" label="新建表单" />
      </RibbonGroup>
      <RibbonGroup $w={122} $pad={10} $soft>
        <SmallColumn $top={20}>
          <Small icon="fileMenu" label="文件菜单" w={26} gap={2} />
          <Small icon="pageMenu" label="页面菜单" w={26} gap={2} />
        </SmallColumn>
      </RibbonGroup>
      <RibbonGroup $w={84} $pad={10}>
        <SmallColumn $top={20}>
          <Small icon="group" label="分组" w={25} gap={2} />
          <Small icon="command" label="命令" w={25} gap={2} />
        </SmallColumn>
      </RibbonGroup>
      <RibbonGroup $w={515} $pad={12}>
        <SmallColumn $w={95} $top={2}>
          <Small icon="tag" label="标签" />
          <Small icon="inputBox" label="输入框" />
          <Small icon="geom" label="几何" />
        </SmallColumn>
        <SmallColumn $w={111} $top={2}>
          <Small icon="cursorBtn" label="按钮" />
          <Small icon="textBox" label="文本框" />
          <Small icon="formSet" label="表单集合" />
        </SmallColumn>
        <SmallColumn $w={94} $top={2}>
          <Small icon="propSet" label="属性集" gap={6} />
          <Small icon="mesh" label="网格" w={21} gap={5} />
          <Small icon="result" label="结果" gap={6} />
        </SmallColumn>
        <SmallColumn $w={93} $top={2}>
          <Small icon="divider" label="分割线" gap={6} />
          <Small icon="chart" label="图表" w={21} />
          <Small icon="table" label="表格" w={22} gap={4} />
        </SmallColumn>
        <SmallColumn $top={20}>
          <Small icon="monitor" label="监控曲线" w={21} />
          <Small icon="inputBox" label="输入控件" w={21} />
        </SmallColumn>
      </RibbonGroup>
      <RibbonGroup $w={194} $pad={4}>
        <Large icon="preview" label="预览表单" w="96px" />
        <Large icon="testApp" label="测试App" w="87px" />
      </RibbonGroup>
      <RibbonGroup $w={100}>
        <Large icon="exportApp" label="导出App" />
      </RibbonGroup>
    </Ribbon>

    <Main>
      <LeftPanel>
        <BrowserHead>
          组合浏览器
          <HeadButtons>
            <svg width="16" height="13" viewBox="0 0 16 13">
              <path d="M0 0l8 6.500-8 6.500zM8 0l8 6.500-8 6.500z" fill="#4d5f7d" />
            </svg>
            <svg width="12" height="12" viewBox="0 0 12 12">
              <path d="M1 1l10 10M11 1L1 11" stroke="#4d5f7d" strokeWidth="2.400" />
            </svg>
          </HeadButtons>
        </BrowserHead>
        <ModelTabs>
          <ModelTab $on>模型</ModelTab>
          <ModelTab>任务</ModelTab>
        </ModelTabs>
        <Tree>
          <TreeLines width="130" height="300" viewBox="0 255 130 300">
            <path
              d="M75 316v24M75 329h15M75 367v166q0 5 5 5h10M75 511h15M105 367v112q0 5 5 5h10M105 380h15M105 406h15M105 432h15M105 458h15"
              fill="none"
              stroke="#dcdcdc"
              strokeWidth="2"
            />
          </TreeLines>
          {TREE.map((row) => (
            <TreeRow key={row.s} $depth={row.d}>
              <ToggleSlot $shown={row.t} />
              <TreeIcon>
                <Icon name={row.i} />
              </TreeIcon>
              <TreeLabel $bold={row.b}>{row.s}</TreeLabel>
            </TreeRow>
          ))}
        </Tree>
        <Properties>
          <PropHead>
            <PropHeadCell $w={150}>属性</PropHeadCell>
            <PropHeadCell>值</PropHeadCell>
          </PropHead>
          {PROPS.map((p) =>
            p.g ? (
              <PropGroup key={p.g}>{p.g}</PropGroup>
            ) : (
              <PropRow key={p.k} $alt={p.alt} $last={p.last}>
                <PropName>{p.k}</PropName>
                <PropValue>{p.v}</PropValue>
              </PropRow>
            )
          )}
        </Properties>
        <BottomTabs>
          <BottomTab>视图</BottomTab>
          <BottomTab $on>数据</BottomTab>
        </BottomTabs>
      </LeftPanel>

      <RightPanel>
        <FormTabs>
          <FormTab $w={87}>总表单</FormTab>
          <FormTab $w={81}>表单1</FormTab>
          <FormTab $w={81}>表单2</FormTab>
          <FormTab $w={81}>表单3</FormTab>
          <FormTab $w={80}>表单4</FormTab>
        </FormTabs>
        <DesignArea>
          <Surface>
            <MiniForm>
              <span>半径</span>
              <MiniInput>24 mm</MiniInput>
            </MiniForm>
            <MiniViewer>
              <MiniTabs>
                <ViewTab $on $w={54} $h={27}>表单1</ViewTab>
                <ViewTab $w={55} $h={27}>表单2</ViewTab>
                <ViewTab $w={55} $h={27}>表单3</ViewTab>
                <ViewTab $w={55} $h={27}>表单4</ViewTab>
              </MiniTabs>
              <MiniToolbar>
                <Icon name="camera" />
                <Icon name="printer" ml={10} />
                <ToolSep $ml={6} />
                <Icon name="measure" ml={6} />
                <Chevron ml={2} />
                <Icon name="ban" ml={12} />
                <Chevron ml={3} />
                <ToolSep $ml={6} />
                <Icon name="zoomBox" ml={10} />
                <Icon name="fit" ml={11} />
                <Icon name="diamond" ml={10} />
                <Icon name="axes" ml={9} />
                <Chevron ml={2} />
                <ToolSep $ml={4} />
                <Icon name="eye" ml={10} />
                <Icon name="split" ml={13} />
                <Icon name="box1" ml={11} />
                <Icon name="box2" ml={18} />
              </MiniToolbar>
              <MiniCanvas />
              <DashLines />
            </MiniViewer>
          </Surface>
          <VScroll>
            <ArrowUp />
            <VThumb />
            <GripThumb>
              {Array.from({ length: 12 }).map((_, i) => (
                <GripLine key={i} />
              ))}
            </GripThumb>
            <ArrowDown />
          </VScroll>
        </DesignArea>
        <HScroll>
          <ArrowLeft />
          <HThumb />
          <ArrowRight />
        </HScroll>
      </RightPanel>
    </Main>
    <StatusBar />

    <Dialog>
      <DialogTitle>
        <Icon name="logo" />
        Test
        <WindowButtons>
          <MinGlyph />
          <WinGlyph $ml={53} width="16" height="16" viewBox="0 0 16 16">
            <rect x="1" y="1" width="14" height="14" fill="none" stroke="#111" strokeWidth="1.300" />
          </WinGlyph>
          <CloseGlyph ml={55} />
        </WindowButtons>
      </DialogTitle>
      <DialogBody>
        <FormPane>
          <Field>
            <FieldRow>
              <FieldLabel $w={33}>半径</FieldLabel>
              <FieldInput>24  mm</FieldInput>
            </FieldRow>
            <SliderRow>
              <SliderTrack />
              <SliderThumb />
            </SliderRow>
          </Field>
          <Field $mt={30}>
            <FieldRow>
              <FieldLabel $w={57}>杨氏模量</FieldLabel>
              <FieldInput>2e+12</FieldInput>
            </FieldRow>
            <SliderRow>
              <SliderTrack />
              <SliderThumb />
            </SliderRow>
          </Field>
          <Field $mt={25}>
            <FieldRow>
              <FieldLabel $w={57}>泊松半径</FieldLabel>
              <FieldInput>0. 73</FieldInput>
            </FieldRow>
            <SliderRow>
              <SliderTrack />
              <SliderThumb />
            </SliderRow>
          </Field>
          <FormButton $mt={37} $ml={179}>生成几何</FormButton>
          <FormButton $mt={44} $ml={179}>生成网格</FormButton>
          <FormButton $mt={59} $ml={160}>计算</FormButton>
        </FormPane>
        <Viewer>
          <ViewerTabs>
            <ViewTab $on $w={53} $h={22}>表单1</ViewTab>
            <ViewTab $w={54} $h={22}>表单2</ViewTab>
            <ViewTab $w={54} $h={22}>表单3</ViewTab>
            <ViewTab $w={54} $h={22}>表单4</ViewTab>
          </ViewerTabs>
          <ViewerFrame>
            <ViewerToolbar>
              <Icon name="camera" />
              <Icon name="printer" ml={14} />
              <ToolSep $ml={13} />
              <Icon name="ban" ml={16} />
              <Caret $ml={12} />
              <ToolSep $ml={11} />
              <Icon name="zoomBox" ml={18} />
              <Icon name="fit" ml={15} />
              <Icon name="diamond" ml={15} />
              <Icon name="axes" ml={16} />
              <Caret $ml={11} />
            </ViewerToolbar>
            <NutView />
          </ViewerFrame>
        </Viewer>
      </DialogBody>
    </Dialog>
  </Page>
);

export default App;
